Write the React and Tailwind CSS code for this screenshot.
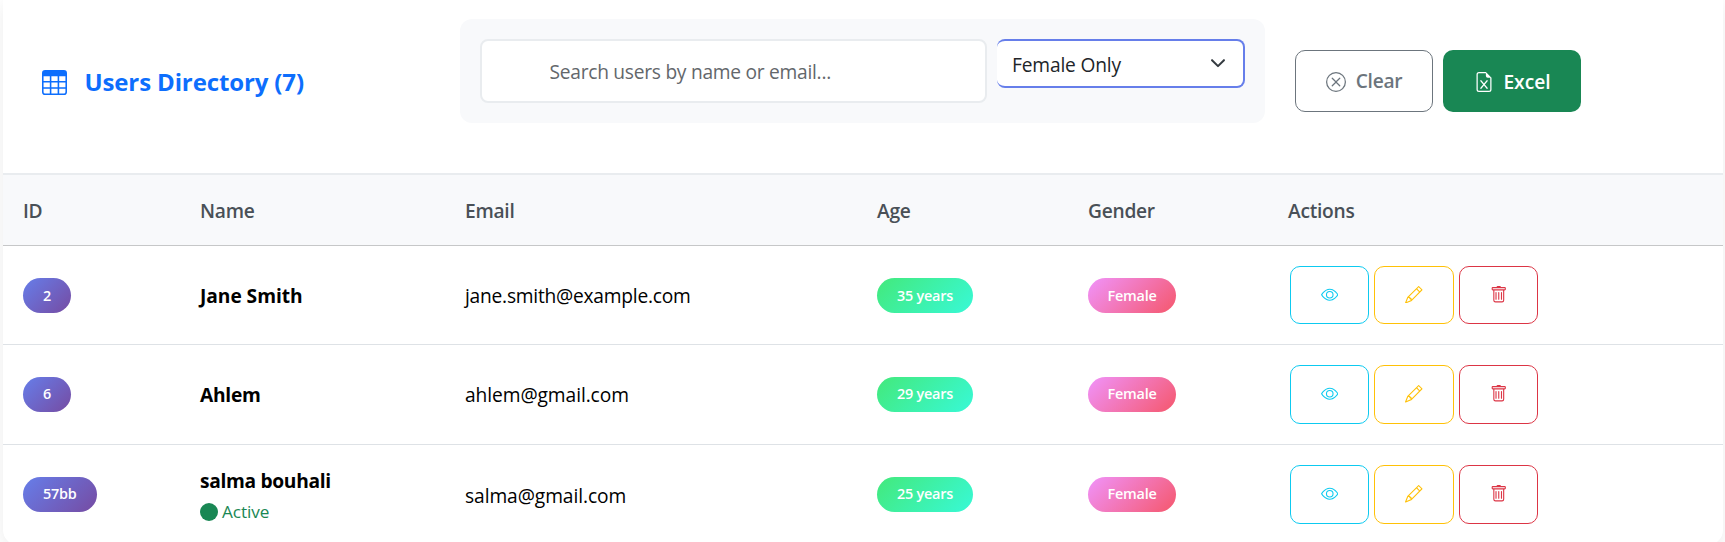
import React from 'react';
import {
  BsTable,
  BsXCircle,
  BsFileEarmarkExcel,
  BsEye,
  BsPencil,
  BsTrash,
  BsCircleFill,
} from 'react-icons/bs';

const users = [
  { id: '2', name: 'Jane Smith', email: 'jane.smith@example.com', age: 35, gender: 'Female', row: 'h-[99px]', button: 'h-[58px]', pillCell: 'pt-[2px]', textCell: 'pt-[3px]', nameText: 'tracking-[-0.05px]', emailText: 'tracking-[-0.24px]' },
  { id: '6', name: 'Ahlem', email: 'ahlem@gmail.com', age: 29, gender: 'Female', row: 'h-[100px]', button: 'h-[59px]', pillCell: 'pt-0', textCell: 'pt-[2px]', nameText: 'tracking-[-0.24px]', emailText: 'tracking-[-0.08px]' },
  { id: '57bb', name: 'salma bouhali', email: 'salma@gmail.com', age: 25, gender: 'Female', row: 'h-[100px]', button: 'h-[59px]', pillCell: 'pt-0', textCell: 'pt-[5px]', nameText: 'tracking-[-0.32px]', emailText: 'tracking-[-0.08px]', active: true },
];

function Pill({ className, children }) {
  return (
    <span
      className={`flex h-[35px] items-center justify-center rounded-[18px] text-[14.4px] font-semibold tracking-[-0.2px] text-white ${className}`}
    >
      {children}
    </span>
  );
}

function ActionButton({ className, label, children }) {
  return (
    <button
      type="button"
      aria-label={label}
      className={`flex items-center justify-center rounded-[10px] border text-[17.5px] ${className}`}
    >
      {children}
    </button>
  );
}

function Toolbar() {
  return (
    <header className="flex h-[175px] items-start border-b-2 border-[#e9ecef]">
      <h5 className="ml-[39px] mt-[64px] flex h-9 w-[418px] items-center text-[24px] font-bold tracking-[-0.13px] text-[#0d6efd]">
        <BsTable className="mr-[17.5px] size-[25px]" />
        Users Directory (7)
      </h5>

      <div className="mt-[19px] flex h-[104px] w-[805px] items-start gap-[10px] rounded-[12px] bg-[#f8f9fb] px-5 pt-5">
        <input
          type="text"
          placeholder="Search users by name or email..."
          className="h-16 w-[507px] rounded-[8px] border-2 border-[#e9ecef] bg-white pl-[67.5px] text-[19.2px] tracking-[-0.27px] outline-none placeholder:text-[#63676b]"
        />
        <div className="flex h-[49px] w-[248px] items-center justify-between rounded-[8px] border-2 border-l-0 border-[#667eea] bg-white pl-[15px] pr-4 text-[19.2px] tracking-[-0.17px] text-[#212529]">
          <span className="pt-[3px]">Female Only</span>
          <svg viewBox="0 0 16 16" className="mb-[2px] size-[18px]" fill="none" stroke="#343a40" strokeWidth="1.8" strokeLinecap="round" strokeLinejoin="round">
            <path d="m2.7 5.5 5.3 5.3 5.3-5.3" />
          </svg>
        </div>
      </div>

      <div className="ml-[30px] mt-[50px] flex gap-[10px] text-[19.2px] font-semibold">
        <button type="button" className="flex h-[62px] w-[138px] items-center justify-center gap-[10px] rounded-[10px] border border-[#6c757d] pt-px tracking-[-0.3px] text-[#6c757d]">
          <BsXCircle className="size-5" />
          Clear
        </button>
        <button type="button" className="flex h-[62px] w-[138px] items-center justify-center gap-[9px] rounded-[10px] bg-[#198754] pl-px pt-[2px] text-white">
          <BsFileEarmarkExcel className="size-5" />
          Excel
        </button>
      </div>
    </header>
  );
}

export default function App() {
  return (
    <div className="h-[542px] overflow-hidden bg-white pl-[3px] pr-[2px] font-['Open_Sans','Noto_Sans',sans-serif]">
      <main className="h-[545px] overflow-hidden rounded-b-[15px] bg-white shadow-[0_5px_20px_rgba(0,0,0,0.08)]">
        <Toolbar />
        <table className="w-full table-fixed border-collapse text-left text-[19.2px] text-black">
          <colgroup>
            <col className="w-[177px]" />
            <col className="w-[265px]" />
            <col className="w-[412px]" />
            <col className="w-[211px]" />
            <col className="w-[200px]" />
            <col />
          </colgroup>
          <thead>
            <tr className="h-[70px] border-b border-[#c6c7c8] bg-[#f8f9fb] tracking-[-0.26px] text-[#495057]">
              {['ID', 'Name', 'Email', 'Age', 'Gender', 'Actions'].map((h) => (
                <th key={h} className="pb-0 pl-5 pt-1 font-semibold">{h}</th>
              ))}
            </tr>
          </thead>
          <tbody>
            {users.map((u) => (
              <tr key={u.id} className={`border-b border-[#dee2e6] ${u.row}`}>
                <td className={`pl-5 align-middle ${u.pillCell}`}>
                  <Pill className="w-fit bg-[linear-gradient(135deg,#667eea_0%,#764ba2_100%)] px-5">{u.id}</Pill>
                </td>
                <td className={`pl-5 align-middle ${u.textCell}`}>
                  <div className={`font-bold leading-[30px] ${u.nameText}`}>{u.name}</div>
                  {u.active && (
                    <div className="flex h-[31px] items-center gap-[4px] text-[17.2px] tracking-[-0.1px] text-[#198754]">
                      <BsCircleFill className="size-[18px]" />
                      <span className="pt-px">Active</span>
                    </div>
                  )}
                </td>
                <td className={`pl-5 align-middle ${u.emailText} ${u.textCell}`}>{u.email}</td>
                <td className={`pl-5 align-middle ${u.pillCell}`}>
                  <Pill className="w-24 bg-[linear-gradient(135deg,#43e97b_0%,#38f9d7_100%)]">{u.age} years</Pill>
                </td>
                <td className={`pl-5 align-middle ${u.pillCell}`}>
                  <Pill className="w-[88px] bg-[linear-gradient(135deg,#f093fb_0%,#f5576c_100%)]">{u.gender}</Pill>
                </td>
                <td className="pl-[22px] align-middle">
                  <div className="flex gap-[5px]">
                    <ActionButton label="View" className={`w-[79px] border-[#0dcaf0] text-[#0dcaf0] ${u.button}`}><BsEye /></ActionButton>
                    <ActionButton label="Edit" className={`w-[80px] border-[#ffc107] text-[#ffc107] ${u.button}`}><BsPencil /></ActionButton>
                    <ActionButton label="Delete" className={`w-[79px] border-[#dc3545] text-[#dc3545] ${u.button}`}><BsTrash /></ActionButton>
                  </div>
                </td>
              </tr>
            ))}
          </tbody>
        </table>
      </main>
    </div>
  );
}
